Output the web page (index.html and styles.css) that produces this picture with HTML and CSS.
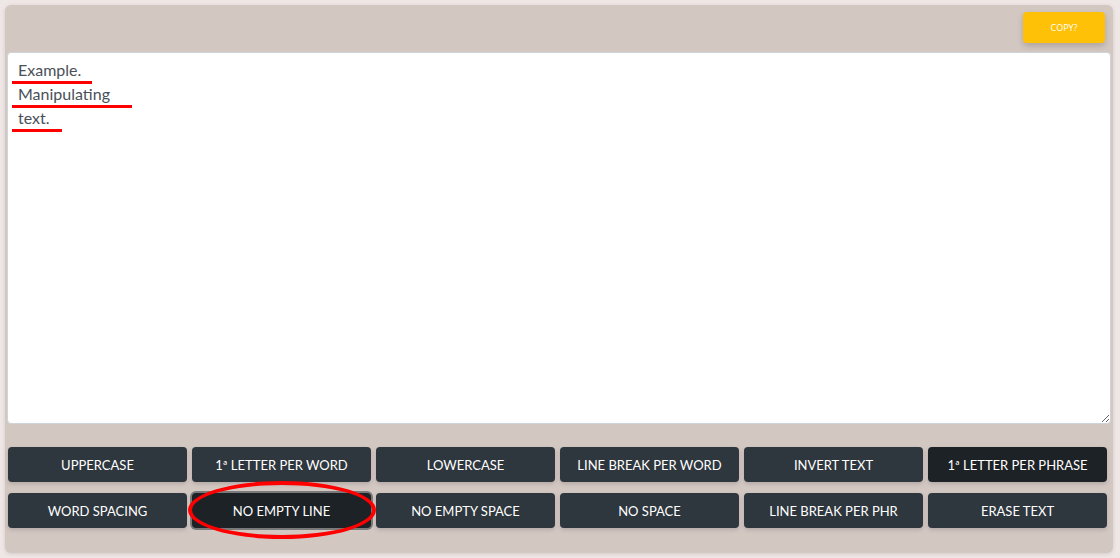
FILE: index.html
```html
<!DOCTYPE html>
<html>
<head>
<meta charset="utf-8">
<link rel="stylesheet" href="styles.css">
</head>
<body>
<div class="card">
  <div class="topbar">
    <button class="copy">COPY?</button>
  </div>
  <div class="editor">
    <textarea class="text" spellcheck="false">Example.
Manipulating
text.</textarea>
    <span class="mark m1"></span>
    <span class="mark m2"></span>
    <span class="mark m3"></span>
  </div>
  <div class="actions">
    <button class="btn">UPPERCASE</button>
    <button class="btn">1ª LETTER PER WORD</button>
    <button class="btn">LOWERCASE</button>
    <button class="btn">LINE BREAK PER WORD</button>
    <button class="btn">INVERT TEXT</button>
    <button class="btn dark">1ª LETTER PER PHRASE</button>
    <button class="btn">WORD SPACING</button>
    <div class="circled">
      <button class="btn dark focus">NO EMPTY LINE</button>
      <span class="ring"></span>
    </div>
    <button class="btn">NO EMPTY SPACE</button>
    <button class="btn">NO SPACE</button>
    <button class="btn">LINE BREAK PER PHR</button>
    <button class="btn">ERASE TEXT</button>
  </div>
</div>
</body>
</html>
```
FILE: styles.css
```css
html, body {
  margin: 0;
  padding: 0;
}
body {
  background: #efe7e6;
  padding: 5px 7px 5px 5px;
  font-family: "Segoe UI", Lato, "Open Sans", sans-serif;
  height: 558px;
  box-sizing: border-box;
}
.card {
  background: #d3c7c2;
  border-radius: 6px;
  box-shadow: 0 1px 4px rgba(0,0,0,0.12);
  padding: 7px 2px 25px 2px;
  height: 548px;
  box-sizing: border-box;
  display: flex;
  flex-direction: column;
}
.topbar {
  display: flex;
  justify-content: flex-end;
  padding-right: 6px;
}
.copy {
  width: 82px;
  height: 31px;
  background: #ffc107;
  border: none;
  border-radius: 4px;
  color: #fff;
  font-family: "Open Sans", sans-serif;
  font-size: 9px;
  box-shadow: 0 3px 6px rgba(0,0,0,0.18);
  padding: 0;
}
.editor {
  position: relative;
  margin-top: 9px;
}
.text {
  display: block;
  width: 1104px;
  height: 372px;
  box-sizing: border-box;
  border: 1px solid #ced4da;
  border-radius: 4px;
  background: #fff;
  color: #495057;
  font-family: "Segoe UI", Lato, sans-serif;
  font-size: 16px;
  line-height: 24px;
  padding: 5px 10px;
  resize: vertical;
  outline: none;
}
.mark {
  position: absolute;
  left: 5px;
  height: 3px;
  background: #ff0000;
}
.m1 { top: 29px; width: 80px; }
.m2 { top: 53px; width: 120px; }
.m3 { top: 77px; width: 50px; }
.actions {
  display: grid;
  grid-template-columns: repeat(6, 179px);
  column-gap: 5px;
  row-gap: 11px;
  margin: 23px 0 0 1px;
}
.btn {
  height: 35px;
  background: #2e363e;
  color: #fff;
  border: none;
  border-radius: 4px;
  font-family: "Segoe UI", Lato, sans-serif;
  font-size: 13px;
  padding: 0;
  box-shadow: 0 2px 4px rgba(0,0,0,0.15);
}
.btn.dark {
  background: #1d2227;
}
.circled {
  position: relative;
  display: flex;
}
.circled .btn {
  flex: 1;
}
.btn.focus {
  box-shadow: 0 0 0 2px #7a7a7a;
}
.ring {
  position: absolute;
  left: -4px;
  top: -12px;
  width: 188px;
  height: 58px;
  box-sizing: border-box;
  border: 4px solid #ff0000;
  border-radius: 50%;
  pointer-events: none;
}
```
